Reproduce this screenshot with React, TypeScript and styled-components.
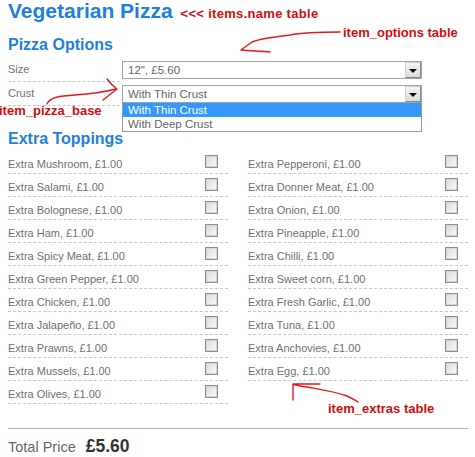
import React from 'react';
import styled, { createGlobalStyle } from 'styled-components';

const BLUE = '#1e7fdf';
const RED = '#d40d0d';
const GREY = '#707070';

const leftToppings = [
  'Mushroom', 'Salami', 'Bolognese', 'Ham', 'Spicy Meat', 'Green Pepper',
  'Chicken', 'Jalapeño', 'Prawns', 'Mussels', 'Olives',
];

const rightToppings = [
  'Pepperoni', 'Donner Meat', 'Onion', 'Pineapple', 'Chilli', 'Sweet corn',
  'Fresh Garlic', 'Tuna', 'Anchovies', 'Egg',
];

const GlobalStyle = createGlobalStyle`
  body {
    margin: 0;
    background: #fff;
    font-family: "Liberation Sans", Arial, sans-serif;
  }
`;

const Page = styled.div`
  position: relative;
  box-sizing: border-box;
  width: 475px;
  height: 457px;
  padding: 0 7px 0 8px;
  overflow: hidden;
`;

const Title = styled.h1`
  margin: 0;
  font-size: 21px;
  line-height: 22px;
  font-weight: 700;
  color: ${BLUE};
  white-space: nowrap;
`;

const InlineNote = styled.span`
  margin-left: 8px;
  font-size: 13px;
  letter-spacing: 0.3px;
  font-weight: 700;
  color: ${RED};
`;

const Note = styled.span<{ $x: number; $y: number }>`
  position: absolute;
  left: ${(p) => p.$x}px;
  top: ${(p) => p.$y}px;
  font-size: 13px;
  line-height: 15px;
  font-weight: 700;
  color: ${RED};
  white-space: nowrap;
  z-index: 3;
`;

const Heading = styled.h2<{ $gap: number }>`
  margin: ${(p) => p.$gap}px 0 0;
  font-size: 16px;
  line-height: 20px;
  font-weight: 700;
  color: ${BLUE};
`;

const Options = styled.div`
  margin-top: 3px;
`;

const OptionRow = styled.div`
  display: grid;
  grid-template-columns: 112px 300px;
  column-gap: 2px;
  align-items: center;
`;

const OptionLabel = styled.div`
  height: 23px;
  line-height: 23px;
  border-bottom: 1px dashed #c8c8c8;
  font-size: 11px;
  color: ${GREY};
`;

const SelectBox = styled.div`
  position: relative;
  box-sizing: border-box;
  display: flex;
  align-items: center;
  justify-content: space-between;
  height: 18px;
  padding-left: 5px;
  border: 1px solid #a3a3a3;
  background: #fff;
  font-size: 11.5px;
  color: #666;
`;

const ArrowButton = styled.span`
  box-sizing: border-box;
  display: flex;
  align-items: center;
  justify-content: center;
  width: 16px;
  height: 16px;
  border: 1px solid;
  border-color: #cfcfcf #8a8a8a #8a8a8a #cfcfcf;
  background: linear-gradient(#f4f4f4, #dcdcdc);

  &::after {
    content: '';
    border-left: 4px solid transparent;
    border-right: 4px solid transparent;
    border-top: 4px solid #111;
    margin-top: 1px;
  }
`;

const DropList = styled.div`
  position: absolute;
  top: calc(100% + 1px);
  left: -1px;
  width: calc(100% + 2px);
  box-sizing: border-box;
  border: 1px solid #9a9a9a;
  border-top: 0;
  background: #fff;
  z-index: 2;
`;

const DropOption = styled.div<{ $active?: boolean }>`
  height: 14px;
  line-height: 14px;
  padding-left: 5px;
  font-size: 11.5px;
  background: ${(p) => (p.$active ? '#3399ff' : '#fff')};
  color: ${(p) => (p.$active ? '#fff' : '#666')};
`;

const ToppingGrid = styled.div`
  display: grid;
  grid-template-columns: 220px 220px;
  column-gap: 20px;
  align-items: start;
  margin-top: 2px;
`;

const ToppingRow = styled.label`
  display: flex;
  justify-content: space-between;
  align-items: flex-start;
  height: 18px;
  padding-top: 4px;
  border-bottom: 1px dashed #c8c8c8;
`;

const ToppingName = styled.span`
  font-size: 11px;
  line-height: 18px;
  color: ${GREY};
`;

const Check = styled.input`
  appearance: none;
  box-sizing: border-box;
  width: 13px;
  height: 13px;
  margin: 0 10px 0 0;
  border: 1px solid #8e8e8e;
  box-shadow: inset 0 0 0 1px #d6d6d6;
  background: linear-gradient(135deg, #d9d9d9, #fbfbfb);
`;

const TotalBar = styled.div`
  display: flex;
  align-items: baseline;
  gap: 10px;
  margin-top: 24px;
  padding-top: 6px;
  border-top: 1px solid #b0b0b0;
  line-height: 22px;
`;

const TotalLabel = styled.span`
  font-size: 14.5px;
  color: #666;
`;

const TotalValue = styled.span`
  font-size: 17.5px;
  font-weight: 700;
  color: #333;
`;

const Scribbles = styled.svg`
  position: absolute;
  left: 0;
  top: 0;
  pointer-events: none;
  z-index: 4;
`;

const Topping = ({ name }: { name: string }): JSX.Element => (
  <ToppingRow>
    <ToppingName>{`Extra ${name}, £1.00`}</ToppingName>
    <Check type="checkbox" />
  </ToppingRow>
);

const App = (): JSX.Element => (
  <Page>
    <GlobalStyle />
    <Title>
      Vegetarian Pizza
      <InlineNote>{'<<< items.name table'}</InlineNote>
    </Title>

    <Heading $gap={10}>Pizza Options</Heading>
    <Options>
      <OptionRow>
        <OptionLabel>Size</OptionLabel>
        <SelectBox>
          {'12", £5.60'}
          <ArrowButton />
        </SelectBox>
      </OptionRow>
      <OptionRow>
        <OptionLabel>Crust</OptionLabel>
        <SelectBox>
          With Thin Crust
          <ArrowButton />
          <DropList>
            <DropOption $active>With Thin Crust</DropOption>
            <DropOption>With Deep Crust</DropOption>
          </DropList>
        </SelectBox>
      </OptionRow>
    </Options>

    <Heading $gap={23}>Extra Toppings</Heading>
    <ToppingGrid>
      <div>
        {leftToppings.map((t) => <Topping key={t} name={t} />)}
      </div>
      <div>
        {rightToppings.map((t) => <Topping key={t} name={t} />)}
      </div>
    </ToppingGrid>

    <TotalBar>
      <TotalLabel>Total Price</TotalLabel>
      <TotalValue>£5.60</TotalValue>
    </TotalBar>

    <Note $x={343} $y={25}>item_options table</Note>
    <Note $x={-1} $y={103}>item_pizza_base</Note>
    <Note $x={328} $y={401}>item_extras table</Note>

    <Scribbles width="475" height="457" viewBox="0 0 475 457">
      <g fill="none" stroke="#e8161b" strokeWidth="1.4" strokeLinecap="round" strokeLinejoin="round">
        <path d="M340 32 C320 32 300 33 290 35 C275 37 262 38 252 42 L241 50 M241 50 C250 51 260 51 270 52" />
        <path d="M47 104 C50 97 60 96 75 95 C90 94 100 93 116 89 M107 79 C110 83 113 86 117 89 L103 100" />
        <path d="M293 384 C299 386 303 387 307 387 C318 389 333 391 347 396 C351 398 355 400 358 402 M293 384 L293 400 M293 384 L320 384" />
      </g>
    </Scribbles>
  </Page>
);

export default App;
